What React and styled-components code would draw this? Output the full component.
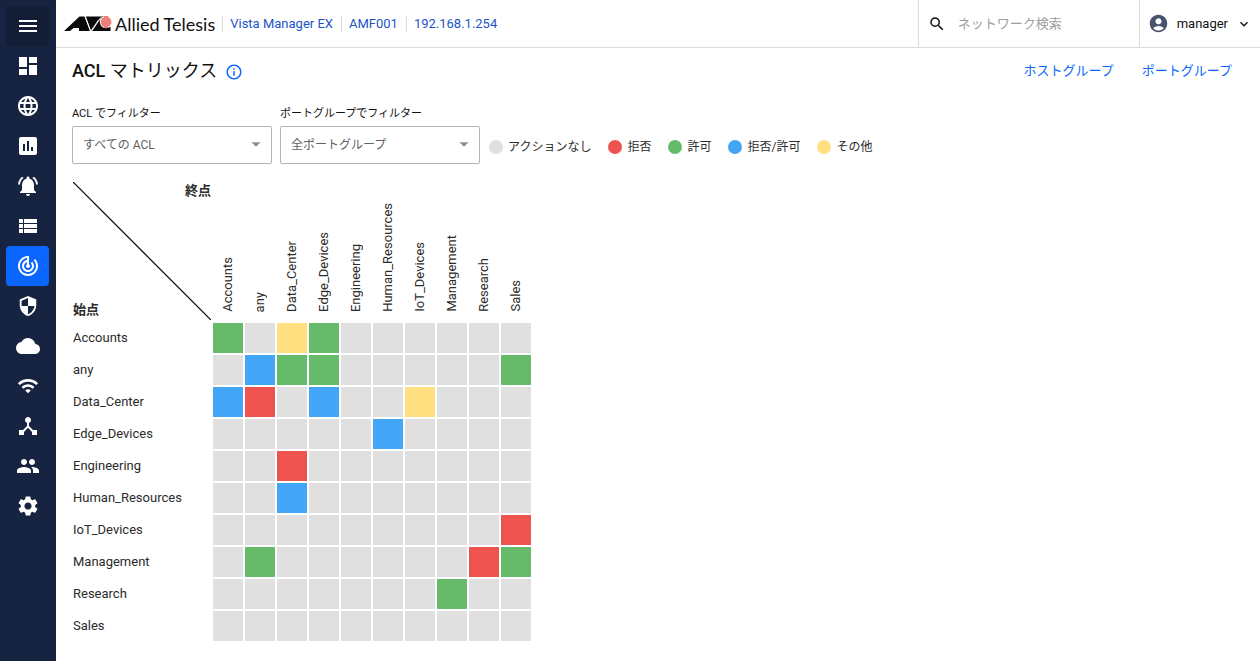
import React from "react";
import styled, { createGlobalStyle } from "styled-components";
import {
  MdMenu,
  MdDashboard,
  MdLanguage,
  MdAssessment,
  MdNotificationsActive,
  MdViewList,
  MdTrackChanges,
  MdSecurity,
  MdCloud,
  MdWifi,
  MdDeviceHub,
  MdPeople,
  MdSettings,
  MdSearch,
  MdAccountCircle,
  MdExpandMore,
  MdArrowDropDown,
  MdOutlineInfo,
} from "react-icons/md";

const GlobalStyle = createGlobalStyle`
  *, *::before, *::after { box-sizing: border-box; }
  body {
    margin: 0;
    background: #fff;
    color: #2b2b2b;
    font-family: Roboto, "Noto Sans CJK JP", sans-serif;
    font-size: 13px;
    line-height: 20px;
  }
  button, input, select { font: inherit; color: inherit; }
  svg { display: block; flex: none; }
`;

const Shell = styled.div`
  display: flex;
  min-height: 100vh;
`;

const Sidebar = styled.nav`
  flex: none;
  width: 56px;
  padding: 6px 7px 6px 6px;
  background: #172441;
  display: flex;
  flex-direction: column;
`;

const NavButton = styled.button`
  display: flex;
  align-items: center;
  justify-content: center;
  height: 40px;
  padding: 0;
  border: 0;
  border-radius: 4px;
  color: #fff;
  cursor: pointer;
  background: ${(p) => p.$background || "transparent"};
`;

const Page = styled.div`
  flex: 1;
  min-width: 0;
`;

const TopBar = styled.header`
  display: flex;
  align-items: stretch;
  height: 48px;
  border-bottom: 1px solid #dcdcdc;
`;

const Brand = styled.a`
  display: flex;
  align-items: center;
  gap: 3px;
  padding-left: 8px;
  margin-right: 7px;
  color: #111;
  text-decoration: none;
`;

const BrandName = styled.span`
  font-family: Lato, sans-serif;
  font-size: 18px;
  line-height: 24px;
`;

const Crumbs = styled.nav`
  display: flex;
  align-items: center;
  flex: 1;
`;

const Crumb = styled.a`
  padding: 0 8px 0 7px;
  border-left: 1px solid #dcdcdc;
  line-height: 16px;
  color: #1c54c8;
  text-decoration: none;
  white-space: nowrap;
`;

const Search = styled.label`
  display: flex;
  align-items: center;
  gap: 12px;
  width: 221px;
  padding-left: 9px;
  border-left: 1px solid #dcdcdc;
  color: #111;
`;

const SearchInput = styled.input`
  flex: 1;
  min-width: 0;
  padding: 0;
  border: 0;
  outline: 0;
  background: none;
  &::placeholder { color: #9e9e9e; opacity: 1; }
`;

const UserMenu = styled.button`
  display: flex;
  align-items: center;
  gap: 8px;
  padding: 0 8px;
  border: 0;
  border-left: 1px solid #dcdcdc;
  background: none;
  color: #111;
  cursor: pointer;
`;

const Content = styled.main`
  padding: 11px 28px 16px 16px;
`;

const TitleRow = styled.div`
  display: flex;
  align-items: center;
  justify-content: space-between;
  height: 24px;
`;

const Title = styled.h1`
  display: flex;
  align-items: center;
  gap: 8px;
  margin: 0;
  font-size: 18px;
  line-height: 24px;
  font-weight: 400;
  color: #111;
`;

const Strong = styled.span`
  font-weight: 500;
`;

const InfoButton = styled.button`
  padding: 2px 0 0;
  border: 0;
  background: none;
  color: #0a66ff;
  cursor: pointer;
`;

const Links = styled.div`
  display: flex;
  gap: 28px;
`;

const PageLink = styled.a`
  color: #0a66ff;
  text-decoration: none;
`;

const Filters = styled.div`
  display: flex;
  flex-wrap: wrap;
  align-items: flex-end;
  gap: 8px;
  margin-top: 22px;
`;

const Field = styled.label`
  display: flex;
  flex-direction: column;
  gap: 3px;
  width: 200px;
  font-size: 11px;
  line-height: 18px;
  color: #111;
`;

const SelectBox = styled.span`
  display: grid;
  align-items: center;
  & > * { grid-area: 1 / 1; }
  & > svg {
    justify-self: end;
    margin: 0 5px 2px 0;
    color: #8f8f8f;
    pointer-events: none;
  }
`;

const Select = styled.select`
  appearance: none;
  width: 100%;
  height: 38px;
  padding: 0 32px 0 10px;
  border: 1px solid #b4b4b4;
  border-radius: 2px;
  background: #fff;
  font-size: 12px;
  color: #616161;
`;

const Legend = styled.ul`
  display: flex;
  flex-wrap: wrap;
  gap: 17px;
  margin: 0;
  padding: 0 0 7px 1px;
  list-style: none;
  font-size: 12px;
`;

const LegendItem = styled.li`
  display: flex;
  align-items: center;
  gap: 5px;
  &::before {
    content: "";
    width: 14px;
    height: 14px;
    border-radius: 50%;
    background: ${(p) => p.$color};
  }
`;

const Matrix = styled.table`
  margin: 16px 0 0 -1px;
  border-spacing: 2px;
  border-collapse: separate;
  table-layout: fixed;
  width: min-content;
`;

const CornerCell = styled.th`
  position: relative;
  width: 138px;
  height: 139px;
  padding: 0;
`;

const Diagonal = styled.svg`
  position: absolute;
  inset: 0;
`;

const CornerLabels = styled.div`
  display: flex;
  flex-direction: column;
  justify-content: space-between;
  height: 137px;
  font-weight: 700;
  line-height: 16px;
  padding-bottom: 2px;
`;

const AxisLabel = styled.span`
  text-align: ${(p) => p.$align};
`;

const ColumnHead = styled.th`
  width: 30px;
  padding: 0 0 9px;
  vertical-align: bottom;
  font-weight: 400;
`;

const VerticalText = styled.span`
  display: block;
  width: 30px;
  line-height: 30px;
  writing-mode: vertical-rl;
  transform: rotate(180deg);
  text-align: left;
  white-space: nowrap;
`;

const RowHead = styled.th`
  height: 30px;
  padding: 0;
  font-weight: 400;
  text-align: left;
`;

const Cell = styled.td`
  width: 30px;
  height: 30px;
  padding: 0;
  background: ${(p) => p.$color};
`;

const COLORS = {
  none: "#e0e0e0",
  deny: "#ef5350",
  permit: "#66bb6a",
  mixed: "#42a5f5",
  other: "#ffdf80",
};

const LEGEND = [
  ["none", "アクションなし"],
  ["deny", "拒否"],
  ["permit", "許可"],
  ["mixed", "拒否/許可"],
  ["other", "その他"],
];

const GROUPS = [
  "Accounts",
  "any",
  "Data_Center",
  "Edge_Devices",
  "Engineering",
  "Human_Resources",
  "IoT_Devices",
  "Management",
  "Research",
  "Sales",
];

const RULES = {
  Accounts: { Accounts: "permit", Data_Center: "other", Edge_Devices: "permit" },
  any: { any: "mixed", Data_Center: "permit", Edge_Devices: "permit", Sales: "permit" },
  Data_Center: { Accounts: "mixed", any: "deny", Edge_Devices: "mixed", IoT_Devices: "other" },
  Edge_Devices: { Human_Resources: "mixed" },
  Engineering: { Data_Center: "deny" },
  Human_Resources: { Data_Center: "mixed" },
  IoT_Devices: { Sales: "deny" },
  Management: { any: "permit", Research: "deny", Sales: "permit" },
  Research: { Management: "permit" },
  Sales: {},
};

const NAV = [
  { Icon: MdDashboard, name: "ダッシュボード" },
  { Icon: MdLanguage, name: "ネットワークマップ" },
  { Icon: MdAssessment, name: "レポート" },
  { Icon: MdNotificationsActive, name: "イベント" },
  { Icon: MdViewList, name: "アセット管理" },
  { Icon: MdTrackChanges, name: "ACL マトリックス", active: true },
  { Icon: MdSecurity, name: "セキュリティー", size: 22 },
  { Icon: MdCloud, name: "クラウド" },
  { Icon: MdWifi, name: "ワイヤレス", size: 22 },
  { Icon: MdDeviceHub, name: "デバイス" },
  { Icon: MdPeople, name: "ユーザー管理" },
  { Icon: MdSettings, name: "システム管理" },
];

function BrandMark() {
  return (
    <svg width="48" height="17" viewBox="0 0 48 17" aria-hidden="true">
      <path d="M0 16 15.5 1.5H20.5L26 16H15V13H9.5L6 16Z" fill="#0b0b0b" />
      <path d="M21.8 1.5H36.5L26.8 15.5Z" fill="#0b0b0b" />
      <path d="M36.5 1.5H40V12H46.5V16H27.5L35 4.8H31Z" fill="#0b0b0b" />
      <path d="M21.2 1.5 26.6 16" stroke="#fff" strokeWidth="1" />
      <path d="M37 2.5 27.6 16" stroke="#fff" strokeWidth="1" />
      <path d="M29.5 3.5H34L30.5 8.5Z" fill="#0b0b0b" />
      <circle cx="42" cy="7" r="6.2" fill="#fff" />
      <path
        d="M39.6 2h4.8M37.6 4h8.8M36.7 6h10.6M36.7 8h10.6M37.6 10h8.8M39.6 12h4.8"
        stroke="#e8554c"
        strokeWidth="1.3"
      />
    </svg>
  );
}

export default function App() {
  return (
    <>
      <GlobalStyle />
      <Shell>
        <Sidebar>
          <NavButton $background="#131e36" aria-label="メニュー">
            <MdMenu size={24} />
          </NavButton>
          {NAV.map(({ Icon, name, size = 24, active }) => (
            <NavButton
              key={name}
              aria-label={name}
              $background={active ? "#0a66ff" : undefined}
            >
              <Icon size={size} />
            </NavButton>
          ))}
        </Sidebar>
        <Page>
          <TopBar>
            <Brand href="#">
              <BrandMark />
              <BrandName>Allied Telesis</BrandName>
            </Brand>
            <Crumbs>
              <Crumb href="#">Vista Manager EX</Crumb>
              <Crumb href="#">AMF001</Crumb>
              <Crumb href="#">192.168.1.254</Crumb>
            </Crumbs>
            <Search>
              <MdSearch size={18} />
              <SearchInput type="search" aria-label="ネットワーク検索" placeholder="ネットワーク検索" />
            </Search>
            <UserMenu>
              <MdAccountCircle size={21} color="#46546c" />
              manager
              <MdExpandMore size={16} />
            </UserMenu>
          </TopBar>
          <Content>
            <TitleRow>
              <Title>
                <span>
                  <Strong>ACL</Strong> マトリックス
                </span>
                <InfoButton aria-label="情報">
                  <MdOutlineInfo size={18} />
                </InfoButton>
              </Title>
              <Links>
                <PageLink href="#">ホストグループ</PageLink>
                <PageLink href="#">ポートグループ</PageLink>
              </Links>
            </TitleRow>
            <Filters>
              <Field>
                ACL でフィルター
                <SelectBox>
                  <Select>
                    <option>すべての ACL</option>
                  </Select>
                  <MdArrowDropDown size={22} />
                </SelectBox>
              </Field>
              <Field>
                ポートグループでフィルター
                <SelectBox>
                  <Select>
                    <option>全ポートグループ</option>
                  </Select>
                  <MdArrowDropDown size={22} />
                </SelectBox>
              </Field>
              <Legend>
                {LEGEND.map(([kind, name]) => (
                  <LegendItem key={kind} $color={COLORS[kind]}>
                    {name}
                  </LegendItem>
                ))}
              </Legend>
            </Filters>
            <Matrix>
              <thead>
                <tr>
                  <CornerCell>
                    <Diagonal width="138" height="138" aria-hidden="true">
                      <path d="M0 0 138 138" stroke="#000" strokeWidth="1.2" />
                    </Diagonal>
                    <CornerLabels>
                      <AxisLabel $align="right">終点</AxisLabel>
                      <AxisLabel $align="left">始点</AxisLabel>
                    </CornerLabels>
                  </CornerCell>
                  {GROUPS.map((name) => (
                    <ColumnHead key={name} scope="col">
                      <VerticalText>{name}</VerticalText>
                    </ColumnHead>
                  ))}
                </tr>
              </thead>
              <tbody>
                {GROUPS.map((source) => (
                  <tr key={source}>
                    <RowHead scope="row">{source}</RowHead>
                    {GROUPS.map((target) => (
                      <Cell key={target} $color={COLORS[RULES[source][target] || "none"]} />
                    ))}
                  </tr>
                ))}
              </tbody>
            </Matrix>
          </Content>
        </Page>
      </Shell>
    </>
  );
}
